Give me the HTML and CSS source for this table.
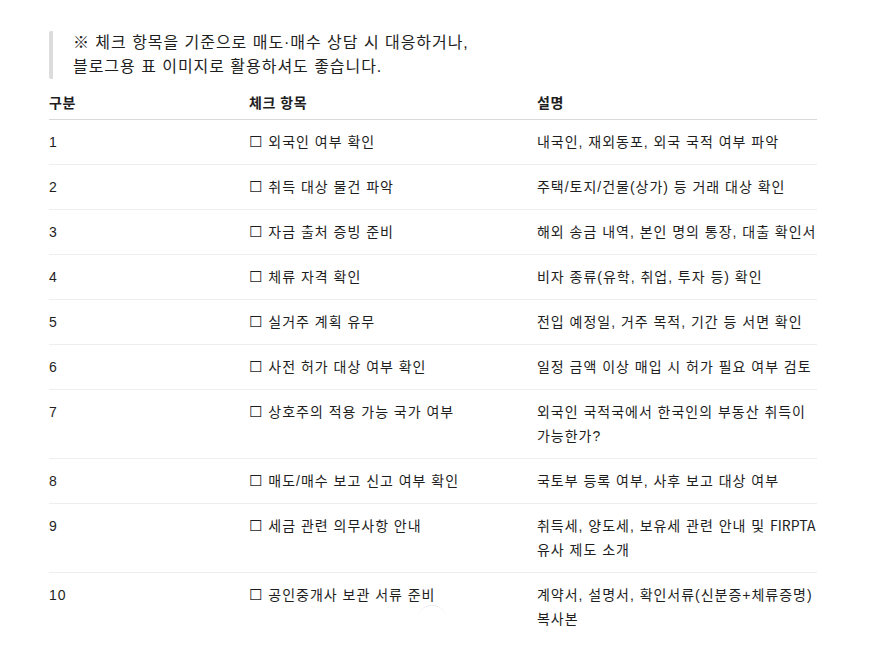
FILE: index.html
```html
<!DOCTYPE html>
<html lang="ko">
<head>
<meta charset="utf-8">
<link rel="stylesheet" href="styles.css">
</head>
<body>
<main class="page">
  <blockquote class="note">
    <p>※ 체크 항목을 기준으로 매도·매수 상담 시 대응하거나,<br>블로그용 표 이미지로 활용하셔도 좋습니다.</p>
  </blockquote>
  <table class="check">
    <colgroup>
      <col class="c1"><col class="c2"><col class="c3">
    </colgroup>
    <thead>
      <tr><th>구분</th><th>체크 항목</th><th>설명</th></tr>
    </thead>
    <tbody>
      <tr><td>1</td><td><span class="box">☐</span> 외국인 여부 확인</td><td>내국인, 재외동포, 외국 국적 여부 파악</td></tr>
      <tr><td>2</td><td><span class="box">☐</span> 취득 대상 물건 파악</td><td>주택/토지/건물(상가) 등 거래 대상 확인</td></tr>
      <tr><td>3</td><td><span class="box">☐</span> 자금 출처 증빙 준비</td><td>해외 송금 내역, 본인 명의 통장, 대출 확인서</td></tr>
      <tr><td>4</td><td><span class="box">☐</span> 체류 자격 확인</td><td>비자 종류(유학, 취업, 투자 등) 확인</td></tr>
      <tr><td>5</td><td><span class="box">☐</span> 실거주 계획 유무</td><td>전입 예정일, 거주 목적, 기간 등 서면 확인</td></tr>
      <tr><td>6</td><td><span class="box">☐</span> 사전 허가 대상 여부 확인</td><td>일정 금액 이상 매입 시 허가 필요 여부 검토</td></tr>
      <tr><td>7</td><td><span class="box">☐</span> 상호주의 적용 가능 국가 여부</td><td>외국인 국적국에서 한국인의 부동산 취득이 가능한가?</td></tr>
      <tr><td>8</td><td><span class="box">☐</span> 매도/매수 보고 신고 여부 확인</td><td>국토부 등록 여부, 사후 보고 대상 여부</td></tr>
      <tr><td>9</td><td><span class="box">☐</span> 세금 관련 의무사항 안내</td><td>취득세, 양도세, 보유세 관련 안내 및 <span class="latin">FIRPTA</span> 유사 제도 소개</td></tr>
      <tr><td>10</td><td><span class="box">☐</span> 공인중개사 보관 서류 준비</td><td>계약서, 설명서, 확인서류(신분증+체류증명) 복사본</td></tr>
    </tbody>
  </table>
  <span class="spinner" aria-hidden="true"></span>
</main>
</body>
</html>
```

FILE: styles.css
```css
html, body {
  margin: 0;
  padding: 0;
  background: #fff;
}
body {
  font-family: "Liberation Sans", "Noto Sans CJK KR", sans-serif;
  color: #1e1e1e;
  word-break: keep-all;
}
.page {
  position: relative;
  width: 768px;
  padding: 31px 0 0 49px;
}
.note {
  margin: 0;
  border-left: 4px solid #dcdcdc;
  border-radius: 2px;
  padding-left: 20px;
}
.note p {
  margin: 0;
  font-size: 16px;
  line-height: 24px;
  letter-spacing: 0.06em;
}
.check {
  width: 768px;
  border-collapse: collapse;
  margin-top: 4px;
  font-size: 14px;
  line-height: 24px;
  table-layout: fixed;
}
.c1 { width: 200px; }
.c2 { width: 288px; }
.c3 { width: 280px; }
.check th {
  text-align: left;
  font-weight: bold;
  padding: 8px 0 4px;
  border-bottom: 1px solid #d9d9d9;
  letter-spacing: 0.04em;
}
.check td {
  vertical-align: top;
  padding: 10px 0;
  border-bottom: 1px solid #eeeeee;
  letter-spacing: 0.07em;
}
.check tbody tr:last-child td {
  border-bottom: none;
}
.box {
  font-size: 15px;
  line-height: 1;
  letter-spacing: 0.1em;
}
.latin {
  font-family: "Noto Sans CJK KR", sans-serif;
  line-height: 1;
  letter-spacing: 0;
}
.spinner {
  position: absolute;
  left: 417px;
  top: 605px;
  width: 30px;
  height: 30px;
  border-radius: 50%;
  border-top: 1px solid #ececec;
  box-sizing: border-box;
}
```
